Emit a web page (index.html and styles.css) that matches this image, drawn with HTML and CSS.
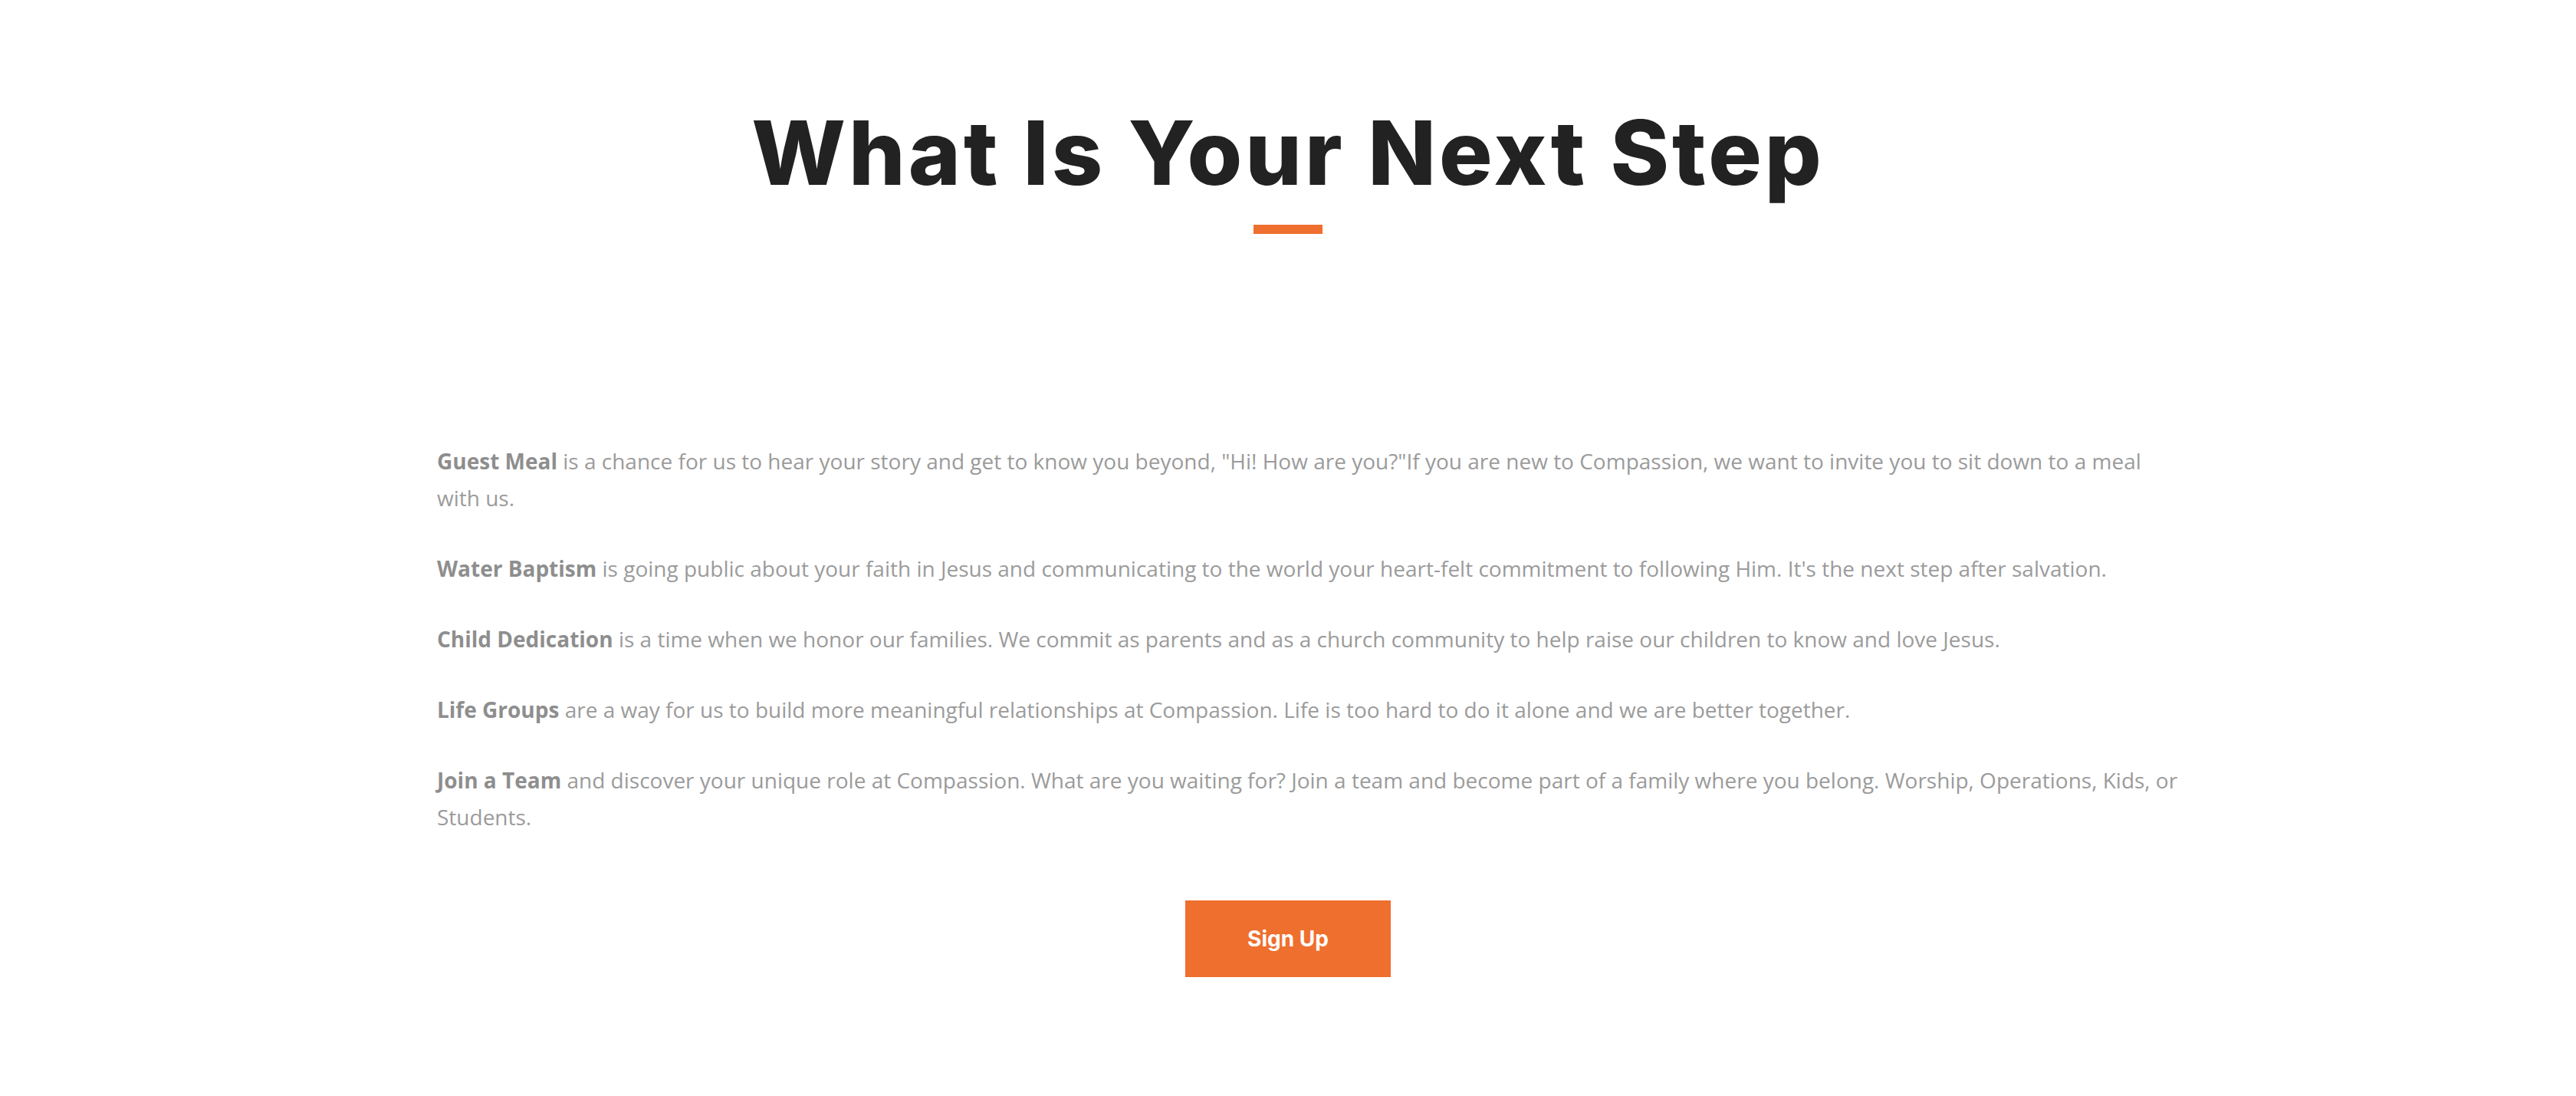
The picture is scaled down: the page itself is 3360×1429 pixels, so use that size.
FILE: index.html
```html
<!DOCTYPE html>
<html lang="en">
<head>
<meta charset="utf-8">
<title>What Is Your Next Step</title>
<link rel="stylesheet" href="styles.css">
</head>
<body>
<section class="next-step">
  <h2 class="next-step__title">What Is Your Next Step</h2>
  <div class="next-step__divider"></div>
  <div class="next-step__content">
    <p><strong>Guest Meal</strong> is a chance for us to hear your story and get to know you beyond, "Hi! How are you?"If you are new to Compassion, we want to invite you to sit down to a meal with us.</p>
    <p><strong>Water Baptism</strong> is going public about your faith in Jesus and communicating to the world your heart-felt commitment to following Him. It's the next step after salvation.</p>
    <p><strong>Child Dedication</strong> is a time when we honor our families. We commit as parents and as a church community to help raise our children to know and love Jesus.</p>
    <p><strong>Life Groups</strong> are a way for us to build more meaningful relationships at Compassion. Life is too hard to do it alone and we are better together.</p>
    <p><strong>Join a Team</strong> and discover your unique role at Compassion. What are you waiting for? Join a team and become part of a family where you belong. Worship, Operations, Kids, or Students.</p>
  </div>
  <div class="next-step__actions">
    <a class="btn" href="#">Sign Up</a>
  </div>
</section>
</body>
</html>
```
FILE: styles.css
```css
html, body {
  margin: 0;
  padding: 0;
  background: #ffffff;
}

.next-step {
  display: flex;
  flex-direction: column;
  align-items: center;
  padding-bottom: 157px;
}

.next-step__title {
  margin: 130px 0 0;
  font-family: Inter, "Noto Sans", sans-serif;
  font-weight: 800;
  font-size: 116px;
  line-height: 1.2;
  color: #222222;
  letter-spacing: 4px;
  text-align: center;
}

.next-step__divider {
  width: 90px;
  height: 12px;
  margin-top: 24px;
  background: #ef6f2e;
}

.next-step__content {
  align-self: flex-start;
  box-sizing: border-box;
  width: 2280px;
  margin: 272px 0 0 570px;
  font-family: "Open Sans", sans-serif;
  font-size: 28px;
  font-weight: 400;
  line-height: 48px;
  color: #9b9b9b;
}

.next-step__content p {
  margin: 0 0 44px;
}

.next-step__content p:last-child {
  margin-bottom: 0;
}

.next-step__content strong {
  font-weight: 700;
  color: #8e8e8e;
}

.next-step__actions {
  margin-top: 85px;
}

.btn {
  display: flex;
  align-items: center;
  justify-content: center;
  width: 268px;
  height: 100px;
  background: #ef6f2e;
  color: #ffffff;
  font-family: Inter, "Noto Sans", sans-serif;
  font-weight: 700;
  font-size: 28px;
  text-decoration: none;
}
```
